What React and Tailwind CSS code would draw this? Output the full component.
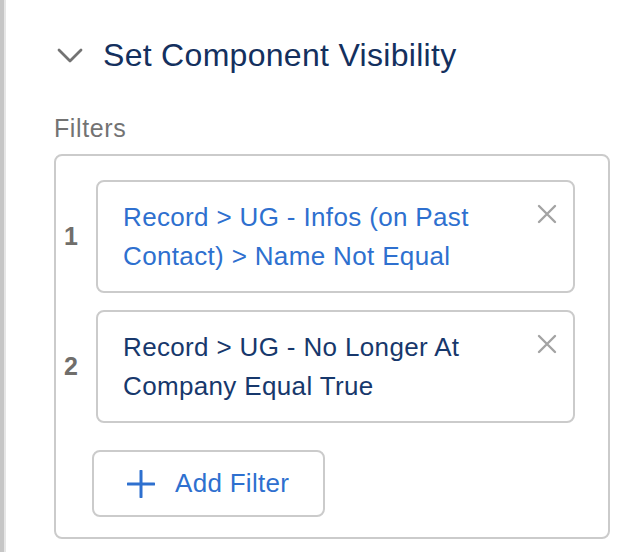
import React from "react";

const filters = [
  { id: 1, text: "Record > UG - Infos (on Past Contact) > Name Not Equal", tone: "text-[#2e70cf]" },
  { id: 2, text: "Record > UG - No Longer At Company Equal True", tone: "text-[#17386c]" },
];

const CloseIcon = () => (
  <svg width="20" height="20" viewBox="0 0 20 20" className="shrink-0 mt-[6px]">
    <path d="M2 2 L18 18 M18 2 L2 18" stroke="#a3a3a3" strokeWidth="2.4" strokeLinecap="round" />
  </svg>
);

const FilterRow = ({ filter }) => (
  <div className="flex items-center">
    <div className="w-[40px] pl-[8px] text-[25px] font-bold text-[#706e6b]">{filter.id}</div>
    <div className="w-[479px] flex items-start gap-4 border-2 border-[#cbcbcb] rounded-[8px] pl-[25px] pr-[16px] pt-[16px] pb-[15px]">
      <p className={`flex-1 text-[26px] leading-[39px] tracking-[0.35px] ${filter.tone}`}>{filter.text}</p>
      <CloseIcon />
    </div>
  </div>
);

export default function App() {
  return (
    <div className="flex min-h-[552px] bg-white" style={{ fontFamily: '"Liberation Sans", Arial, sans-serif' }}>
      <div className="w-[4px] bg-[#c6c6c6]" />
      <div className="w-[2px] bg-[#e6e6e6]" />
      <div className="flex-1 pl-[48px] pr-[12px] pt-[35px]">
        <div className="flex items-center h-[40px]">
          <svg width="26" height="15" viewBox="0 0 26 15" className="ml-[3px]">
            <path d="M2 2 L13 13 L24 2" fill="none" stroke="#737373" strokeWidth="2.8" strokeLinecap="round" strokeLinejoin="round" />
          </svg>
          <h2 className="ml-[20px] text-[32px] leading-[40px] tracking-[0.3px] text-[#14305e]">Set Component Visibility</h2>
        </div>

        <div className="mt-[38px] text-[25px] leading-[30px] tracking-[0.6px] text-[#737373]">Filters</div>

        <div className="mt-[11px] border-2 border-[#cbcbcb] rounded-[8px] pt-[24px] pb-[20px]">
          <div className="flex flex-col gap-[17px]">
            {filters.map((f) => (
              <FilterRow key={f.id} filter={f} />
            ))}
          </div>
          <button className="mt-[27px] ml-[36px] h-[67px] flex items-center gap-[20px] border-2 border-[#cbcbcb] rounded-[8px] pl-[33px] pr-[34px] text-[26px] tracking-[0.3px] text-[#2e70cf]">
            <svg width="28" height="28" viewBox="0 0 28 28">
              <path d="M14 1 L14 27 M1 14 L27 14" stroke="#2e70cf" strokeWidth="3" strokeLinecap="round" />
            </svg>
            Add Filter
          </button>
        </div>
      </div>
    </div>
  );
}
